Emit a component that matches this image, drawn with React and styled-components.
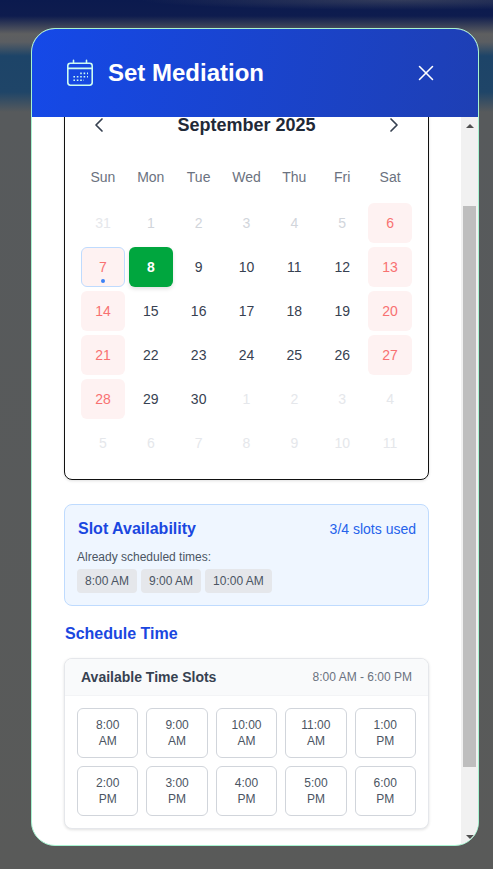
import React, { useLayoutEffect, useRef } from "react";
import styled, { createGlobalStyle } from "styled-components";
import { X, ChevronLeft, ChevronRight } from "lucide-react";

const GlobalStyle = createGlobalStyle`
  html, body {
    margin: 0;
    height: 100%;
    overflow: hidden;
  }
  body {
    font-family: "Liberation Sans", Arial, sans-serif;
  }
`;

const Backdrop = styled.div`
  width: 493px;
  height: 869px;
  box-sizing: border-box;
  padding: 28px 14px 23px 31px;
  background:
    radial-gradient(ellipse 260px 10px at 400px 0, rgba(110, 110, 110, 0.4), rgba(110, 110, 110, 0)),
    linear-gradient(
      180deg,
      #0b1a4e 0,
      #0e1c4e 16px,
      #5e5f60 34px,
      #5b5e62 42px,
      #1d4468 56px,
      #1f4568 92px,
      #575a5c 112px,
      #595a59 869px
    );
`;

const Modal = styled.div`
  width: 448px;
  height: 818px;
  box-sizing: border-box;
  display: flex;
  flex-direction: column;
  background: #fff;
  border: 1px solid #a7f3d0;
  border-radius: 24px;
  overflow: hidden;
`;

const ModalHeader = styled.header`
  flex: 0 0 88px;
  display: flex;
  align-items: center;
  justify-content: space-between;
  padding: 0 39px 0 34px;
  background: linear-gradient(100deg, #1549e8, #1e3fb4);
  color: #fff;
`;

const TitleGroup = styled.div`
  display: flex;
  align-items: center;
  gap: 14px;
`;

const ModalTitle = styled.h2`
  margin: 0;
  font-size: 24px;
  line-height: 32px;
  font-weight: 700;
`;

const CloseButton = styled.button`
  display: flex;
  padding: 0;
  border: 0;
  background: none;
  color: #fff;
`;

const ModalMain = styled.div`
  flex: 1;
  min-height: 0;
  display: flex;
`;

const ScrollBody = styled.div`
  flex: 1;
  min-width: 0;
  overflow-y: scroll;
  padding: 0 32px 82px;
`;

const ScrollRail = styled.div`
  flex: 0 0 17px;
  display: flex;
  flex-direction: column;
  background: #f1f1f1;
`;

const RailArrow = styled.div`
  flex: 0 0 17px;
  display: flex;
  align-items: center;
  justify-content: center;

  &::before {
    content: "";
    border-left: 4px solid transparent;
    border-right: 4px solid transparent;
    border-${({ $dir }) => ($dir === "up" ? "bottom" : "top")}: 4px solid #505050;
  }
`;

const RailTrack = styled.div`
  flex: 1;
  padding: 72px 2px 0;
`;

const RailThumb = styled.div`
  height: 561px;
  background: #bebebe;
`;

const CalendarCard = styled.section`
  margin-top: 32px;
  padding: 0 16px 16px;
  border: 1px solid #111;
  border-radius: 8px;
  background: #fff;
  box-shadow: 0 1px 3px rgba(0, 0, 0, 0.12);
`;

const MonthBar = styled.div`
  display: flex;
  align-items: center;
  justify-content: space-between;
  height: 32px;
  margin-top: 52px;
  padding: 0 6px;
  color: #374151;
`;

const MonthName = styled.div`
  font-size: 18px;
  font-weight: 700;
  color: #1f2937;
`;

const WeekRow = styled.div`
  display: grid;
  grid-template-columns: repeat(7, 1fr);
  gap: 4px;
  margin-top: 26px;
  margin-bottom: 16px;
`;

const WeekDay = styled.div`
  height: 20px;
  line-height: 20px;
  text-align: center;
  font-size: 14px;
  color: #6b7280;
`;

const DayGrid = styled.div`
  display: grid;
  grid-template-columns: repeat(7, 1fr);
  gap: 4px;
`;

const dayColor = ({ $kind }) => {
  if ($kind === "selected") return "#fff";
  if ($kind === "off") return "#f87171";
  if ($kind === "muted") return "#d1d5db";
  if ($kind === "faint") return "#e5e7eb";
  return "#374151";
};

const Day = styled.div`
  position: relative;
  height: 40px;
  box-sizing: border-box;
  display: flex;
  align-items: center;
  justify-content: center;
  font-size: 14px;
  border-radius: 6px;
  color: ${dayColor};
  font-weight: ${({ $kind }) => ($kind === "selected" ? 700 : 400)};
  background: ${({ $kind }) =>
    $kind === "selected" ? "#00a63e" : $kind === "off" ? "#fef2f2" : "transparent"};
  border: ${({ $today }) => ($today ? "1px solid #bfdbfe" : "0")};
  box-shadow: ${({ $kind }) =>
    $kind === "selected" ? "0 2px 4px rgba(0, 0, 0, 0.12)" : "none"};
`;

const TodayDot = styled.span`
  position: absolute;
  left: 50%;
  bottom: 3px;
  width: 4px;
  height: 4px;
  margin-left: -2px;
  border-radius: 50%;
  background: #3b82f6;
`;

const AvailabilityBox = styled.section`
  margin-top: 24px;
  padding: 12px;
  border: 1px solid #bfdbfe;
  border-radius: 8px;
  background: #eff6ff;
`;

const AvailabilityHead = styled.div`
  display: flex;
  align-items: center;
  justify-content: space-between;
  height: 24px;
  padding-left: 1px;
`;

const BlueHeading = styled.h3`
  margin: 0;
  font-size: 16px;
  line-height: 24px;
  font-weight: 700;
  color: #1a47e0;
`;

const UsedCount = styled.span`
  font-size: 14px;
  color: #2563eb;
`;

const ScheduledLabel = styled.div`
  margin-top: 8px;
  font-size: 12px;
  line-height: 16px;
  color: #4b5563;
`;

const ChipRow = styled.div`
  display: flex;
  gap: 4px;
  margin-top: 4px;
`;

const Chip = styled.span`
  padding: 4px 8px;
  border-radius: 4px;
  background: #e5e7eb;
  font-size: 12px;
  line-height: 16px;
  color: #4b5563;
`;

const ScheduleHeading = styled(BlueHeading)`
  margin-top: 16px;
  padding-left: 1px;
`;

const SlotPanel = styled.section`
  margin-top: 12px;
  border: 1px solid #e5e7eb;
  border-radius: 8px;
  background: #fff;
  box-shadow: 0 1px 3px rgba(0, 0, 0, 0.12);
  overflow: hidden;
`;

const SlotPanelHead = styled.div`
  display: flex;
  align-items: center;
  justify-content: space-between;
  height: 36px;
  padding: 0 16px;
  background: #f9fafb;
  border-bottom: 1px solid #f3f4f6;
`;

const SlotPanelTitle = styled.div`
  font-size: 14px;
  font-weight: 700;
  color: #374151;
`;

const SlotHours = styled.div`
  font-size: 12px;
  color: #6b7280;
`;

const SlotGrid = styled.div`
  display: grid;
  grid-template-columns: repeat(5, 1fr);
  gap: 8px;
  padding: 12px;
`;

const SlotButton = styled.button`
  height: 50px;
  padding: 0 12px;
  border: 1px solid #d1d5db;
  border-radius: 6px;
  background: #fff;
  font-family: inherit;
  font-size: 12px;
  line-height: 16px;
  color: #4b5563;
`;

const weekDays = ["Sun", "Mon", "Tue", "Wed", "Thu", "Fri", "Sat"];

const buildDays = () => {
  const days = [{ n: 31, kind: "faint" }];
  for (let n = 1; n <= 30; n++) {
    const col = n % 7;
    let kind = "normal";
    if (n < 7) kind = "muted";
    if (col === 0 || col === 6) kind = "off";
    days.push({ n, kind });
  }
  days[8].kind = "selected";
  for (let n = 1; n <= 11; n++) days.push({ n, kind: "faint" });
  return days;
};

const scheduled = ["8:00 AM", "9:00 AM", "10:00 AM"];
const slots = [
  "8:00 AM", "9:00 AM", "10:00 AM", "11:00 AM", "1:00 PM",
  "2:00 PM", "3:00 PM", "4:00 PM", "5:00 PM", "6:00 PM",
];

const CalendarIcon = () => (
  <svg width="28" height="28" viewBox="0 0 28 28" fill="none" stroke="#ccfbf1" strokeWidth="1.6" strokeLinecap="round">
    <rect x="1.8" y="4.2" width="24.4" height="22" rx="2.6" />
    <path d="M1.8 9.4H26.2M7.5 1.4V4.2M20.5 1.4V4.2" />
    <path
      strokeDasharray="1.6 1.8"
      strokeLinecap="butt"
      strokeWidth="1.6"
      d="M14.2 14.4H22M7.4 17.8H22M7.4 21.2H18"
    />
  </svg>
);

const App = () => {
  const bodyRef = useRef(null);

  useLayoutEffect(() => {
    bodyRef.current.scrollTop = 93;
  }, []);

  return (
    <Backdrop>
      <GlobalStyle />
      <Modal>
        <ModalHeader>
          <TitleGroup>
            <CalendarIcon />
            <ModalTitle>Set Mediation</ModalTitle>
          </TitleGroup>
          <CloseButton aria-label="Close">
            <X size={26} strokeWidth={1.4} />
          </CloseButton>
        </ModalHeader>
        <ModalMain>
          <ScrollBody ref={bodyRef}>
            <CalendarCard>
              <MonthBar>
                <ChevronLeft size={24} strokeWidth={1.7} />
                <MonthName>September 2025</MonthName>
                <ChevronRight size={24} strokeWidth={1.7} />
              </MonthBar>
              <WeekRow>
                {weekDays.map((d) => (
                  <WeekDay key={d}>{d}</WeekDay>
                ))}
              </WeekRow>
              <DayGrid>
                {buildDays().map((d, i) => (
                  <Day key={i} $kind={d.kind} $today={i === 7}>
                    {d.n}
                    {i === 7 && <TodayDot />}
                  </Day>
                ))}
              </DayGrid>
            </CalendarCard>

            <AvailabilityBox>
              <AvailabilityHead>
                <BlueHeading>Slot Availability</BlueHeading>
                <UsedCount>3/4 slots used</UsedCount>
              </AvailabilityHead>
              <ScheduledLabel>Already scheduled times:</ScheduledLabel>
              <ChipRow>
                {scheduled.map((t) => (
                  <Chip key={t}>{t}</Chip>
                ))}
              </ChipRow>
            </AvailabilityBox>

            <ScheduleHeading>Schedule Time</ScheduleHeading>
            <SlotPanel>
              <SlotPanelHead>
                <SlotPanelTitle>Available Time Slots</SlotPanelTitle>
                <SlotHours>8:00 AM - 6:00 PM</SlotHours>
              </SlotPanelHead>
              <SlotGrid>
                {slots.map((t) => (
                  <SlotButton key={t}>{t}</SlotButton>
                ))}
              </SlotGrid>
            </SlotPanel>
          </ScrollBody>
          <ScrollRail>
            <RailArrow $dir="up" />
            <RailTrack>
              <RailThumb />
            </RailTrack>
            <RailArrow $dir="down" />
          </ScrollRail>
        </ModalMain>
      </Modal>
    </Backdrop>
  );
};

export default App;
